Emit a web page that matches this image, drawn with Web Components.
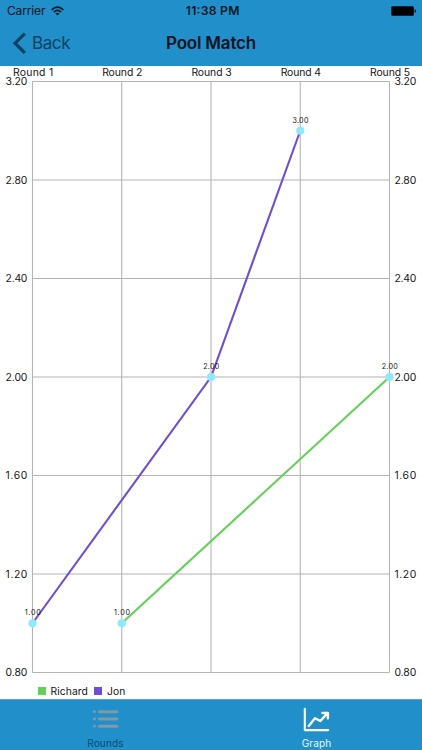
<!DOCTYPE html>
<html lang="en">
<head>
<meta charset="utf-8">
<title>Pool Match</title>
<style>
body {
    margin: 0;
    height: 750px;
    display: flex;
    flex-direction: column;
    overflow: hidden;
    background: #fff;
    font-family: Inter, "Liberation Sans", sans-serif;
}
line-chart {
    flex: 1;
}
</style>
</head>
<body>
<status-bar carrier="Carrier" time="11:38 PM"></status-bar>
<nav-bar back="Back">Pool Match</nav-bar>
<line-chart></line-chart>
<tab-bar>
    <tab-item label="Rounds">
        <svg width="27" height="20" viewBox="0 0 27 20" fill="none" stroke="#8497a3" stroke-width="2.9" stroke-linecap="round">
            <path d="M7.4 2.7H25M7.4 10H25M7.4 17.3H25M2.4 2.7h.1M2.4 10h.1M2.4 17.3h.1"/>
        </svg>
    </tab-item>
    <tab-item label="Graph" active>
        <svg width="27" height="25" viewBox="0 0 27 25" fill="none" stroke="#fff" stroke-width="2.1" stroke-linecap="round" stroke-linejoin="round">
            <path d="M1.8 1.8V23.1H25.2"/>
            <path stroke-width="2.4" d="M5.7 18.9L12 11.2L17.4 14L24.6 6M19.5 6H24.9V11.2"/>
        </svg>
    </tab-item>
</tab-bar>

<script>
class StatusBar extends HTMLElement {
    constructor() {
        super();
        this.attachShadow({mode: "open"});
    }

    connectedCallback() {
        this.shadowRoot.innerHTML = `
        <style>
        :host {
            display: grid;
            grid-template-columns: 1fr auto 1fr;
            align-items: center;
            height: 22px;
            padding: 0 5px 0 7px;
            background: #208fca;
            color: #06151e;
        }
        .left { display: flex; align-items: center; gap: 4px; }
        .battery { justify-self: end; }
        svg { display: block; }
        </style>
        <div class="left">
            <svg width="40" height="16"><text x="0" y="12.3" font-size="12" textLength="38.5" fill="currentColor">${this.getAttribute("carrier")}</text></svg>
            <svg width="13" height="10" viewBox="0 0 13 10">
                <g fill="none" stroke="#06151e" stroke-width="1.7">
                    <path d="M.7 3.8Q6.5-1.5 12.3 3.8M2.9 6.1Q6.5 2.8 10.1 6.1"/>
                </g>
                <path d="M4.5 7.5Q6.5 5.8 8.5 7.5L6.5 9.6Z" fill="#06151e"/>
            </svg>
        </div>
        <svg width="56" height="16"><text x="1.8" y="12.3" font-size="12.1" font-weight="600" textLength="53.5" fill="#06151e">${this.getAttribute("time")}</text></svg>
        <svg class="battery" width="26" height="10" viewBox="0 0 26 10">
            <rect x=".3" y=".2" width="22.5" height="9.5" rx="1.2" fill="#000"/>
            <path d="M23.6 3.2Q25.2 3.6 25.2 5T23.6 6.8Z" fill="#000"/>
        </svg>`;
    }
}

class NavBar extends HTMLElement {
    constructor() {
        super();
        this.attachShadow({mode: "open"});
    }

    connectedCallback() {
        this.shadowRoot.innerHTML = `
        <style>
        :host {
            display: grid;
            grid-template-columns: 1fr auto 1fr;
            align-items: center;
            box-sizing: border-box;
            height: 44px;
            padding: 0 12px;
            background: #208fca;
            color: #04131d;
        }
        .back { display: flex; align-items: center; gap: 5.5px; padding-bottom: 2px; color: #0b4261; }
        .title { font-size: 17px; font-weight: 600; letter-spacing: -.2px; line-height: 42px; padding-bottom: 2px; }
        svg { display: block; }
        </style>
        <div class="back">
            <svg width="14" height="22" viewBox="0 0 14 22" fill="none" stroke="currentColor" stroke-width="3.2"><path d="M12.8 1.6L3 11.2L12.8 20.8"/></svg>
            <svg width="42" height="24"><text x="0" y="18" font-size="17" textLength="38.5" fill="currentColor">${this.getAttribute("back")}</text></svg>
        </div>
        <div class="title"><slot></slot></div>`;
    }
}

const rounds = ["Round 1", "Round 2", "Round 3", "Round 4", "Round 5"];
const ticks = [3.2, 2.8, 2.4, 2.0, 1.6, 1.2, 0.8];
const series = [
    {name: "Richard", color: "#61d257", points: [[1, 1], [4, 2]]},
    {name: "Jon", color: "#6e4dda", points: [[0, 1], [2, 2], [3, 3]]}
];

// plot coordinates, relative to the top of the chart
const xPos = i => 32.5 + i * 89.25;
const yPos = v => 15.5 + (3.2 - v) / 0.4 * 98.5;

class LineChart extends HTMLElement {
    constructor() {
        super();
        this.attachShadow({mode: "open"});
    }

    connectedCallback() {
        const grid = rounds.map((r, i) => `<path d="M${xPos(i)} 15.5V606.5"/>`).join("") +
            ticks.map(t => `<path d="M32.5 ${yPos(t)}H389.5"/>`).join("");

        const labels = rounds.map((r, i) =>
            `<text x="${xPos(i) - 19.6}" y="9.7" textLength="40.3">${r}</text>`).join("") +
            ticks.map(t => `
            <text x="5.6" y="${yPos(t) + 3.6}" textLength="21.8">${t.toFixed(2)}</text>
            <text x="394.4" y="${yPos(t) + 3.6}" textLength="21.8">${t.toFixed(2)}</text>`).join("");

        const lines = series.map(s =>
            `<polyline stroke="${s.color}" points="${s.points.map(p => xPos(p[0]) + "," + yPos(p[1])).join(" ")}"/>`).join("");

        const points = series.flatMap(s => s.points);
        const values = points.map(p =>
            `<text x="${xPos(p[0]) - 7.8}" y="${yPos(p[1]) - 8.2}" textLength="16">${p[1].toFixed(2)}</text>`).join("");
        const dots = points.map(p => `<circle cx="${xPos(p[0])}" cy="${yPos(p[1])}" r="4.1"/>`).join("");

        this.shadowRoot.innerHTML = `
        <style>
        :host { display: flex; flex-direction: column; min-height: 0; background: #fff; color: #161616; }
        .plot { display: block; flex: none; }
        .legend { display: flex; gap: 6px; padding: 4px 0 0 37.5px; font-size: 10.3px; line-height: 14px; letter-spacing: .09px; }
        .item { display: flex; align-items: center; gap: 5px; }
        .swatch { width: 8px; height: 8px; }
        </style>
        <svg class="plot" width="422" height="614">
            <g stroke="#b4b4b4" stroke-width="1.1" fill="none">${grid}</g>
            <g stroke-width="2.1" fill="none">${lines}</g>
            <g font-size="10.4" fill="#161616">${labels}</g>
            <g font-size="7.2" fill="#161616">${values}</g>
            <g fill="#8ceaff">${dots}</g>
        </svg>
        <div class="legend">
            ${series.map(s => `<div class="item"><span class="swatch" style="background:${s.color}"></span>${s.name}</div>`).join("")}
        </div>`;
    }
}

class TabBar extends HTMLElement {
    constructor() {
        super();
        this.attachShadow({mode: "open"});
        this.shadowRoot.innerHTML = `
        <style>
        :host {
            display: grid;
            grid-template-columns: 1fr 1fr;
            box-sizing: border-box;
            height: 51px;
            border-top: 1px solid #5ba3c8;
            background: #208fca;
        }
        </style>
        <slot></slot>`;
    }
}

class TabItem extends HTMLElement {
    constructor() {
        super();
        this.attachShadow({mode: "open"});
    }

    connectedCallback() {
        this.shadowRoot.innerHTML = `
        <style>
        :host { display: flex; flex-direction: column; align-items: center; color: #0c4c70; }
        :host([active]) { color: #e4f6ff; }
        .icon { display: flex; align-items: center; height: 38px; }
        .label { font-size: 10.1px; line-height: 10px; letter-spacing: .12px; }
        </style>
        <div class="icon"><slot></slot></div>
        <div class="label">${this.getAttribute("label")}</div>`;
    }
}

customElements.define("status-bar", StatusBar);
customElements.define("nav-bar", NavBar);
customElements.define("line-chart", LineChart);
customElements.define("tab-bar", TabBar);
customElements.define("tab-item", TabItem);
</script>
</body>
</html>
